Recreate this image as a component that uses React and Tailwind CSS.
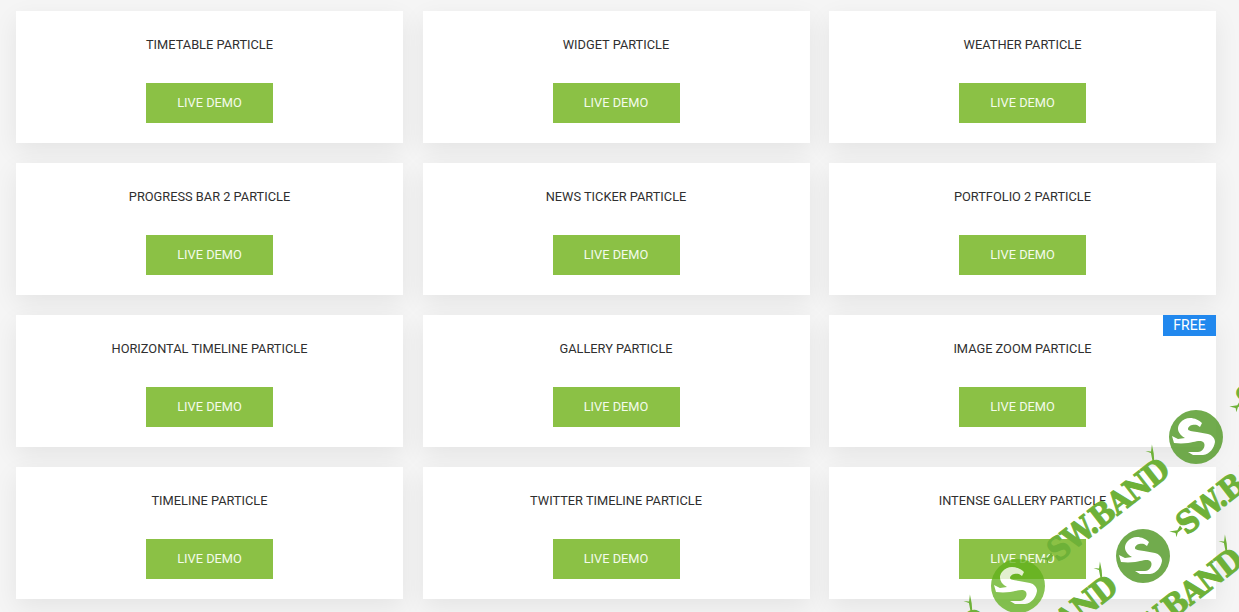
const items = [
  "TIMETABLE PARTICLE", "WIDGET PARTICLE", "WEATHER PARTICLE",
  "PROGRESS BAR 2 PARTICLE", "NEWS TICKER PARTICLE", "PORTFOLIO 2 PARTICLE",
  "HORIZONTAL TIMELINE PARTICLE", "GALLERY PARTICLE", "IMAGE ZOOM PARTICLE",
  "TIMELINE PARTICLE", "TWITTER TIMELINE PARTICLE", "INTENSE GALLERY PARTICLE",
];

function Logo({ x, y, light }) {
  return (
    <svg className="absolute" style={{ left: x - 30, top: y - 30 }} width="60" height="60" viewBox="-30 -30 60 60">
      <g opacity={light ? 0.75 : 0.9}>
        <circle r="27" fill={light ? "#5fb01a" : "#62a23a"} />
        <path
          d="M6 -14 C 1 -19 -10 -22 -16 -14 C -20 -9 -18 -3 -11 1 L -18 2 L -24 -1 L -22 6 C -14 7 -6 6 -3 5 C 2 4 6 3 8 6 C 10 10 6 15 2 15 L -8 15 L -3 18 L 7 18 C 14 17 18 11 19 5 C 19 1 16 -2 12 -3 L 1 -5 C -4 -6 -8 -6 -8 -8 C -8 -12 -2 -13 1 -12 L 4 -10 Z"
          fill="#ffffff"
        />
      </g>
    </svg>
  );
}

function Mark({ x, y }) {
  return (
    <span
      className="absolute whitespace-nowrap text-[31px] leading-none font-bold text-[#6eb138] -translate-x-1/2 -translate-y-1/2 -rotate-[38deg] [font-family:'DejaVu_Serif_Condensed','DejaVu_Serif',serif] tracking-[-1px] [-webkit-text-stroke:1px_#6eb138]"
      style={{ left: x, top: y }}
    >
      SW.BAND
      <svg className="absolute -right-[5px] -top-[10px]" width="14" height="16" viewBox="0 0 14 16">
        <path d="M2 15 L6 7 L3 2 L7 6 L12 1 L8 9 L4 15 Z" fill="#6eb138" />
      </svg>
      <svg className="absolute -left-[12px] top-[9px]" width="14" height="14" viewBox="0 0 14 14">
        <path d="M1 3 L8 7 L13 5 L13 9 L7 9 L3 12 L5 8 Z" fill="#6eb138" />
      </svg>
    </span>
  );
}

function Card({ title, free }) {
  return (
    <div className="relative h-[132px] bg-white flex flex-col items-center pt-[26px] shadow-[0_8px_24px_rgba(0,0,0,0.07)]">
      {free && (
        <span className="absolute right-0 top-0 w-[53px] h-[21px] bg-[#2188ee] text-white text-[14px] leading-[21px] text-center">
          FREE
        </span>
      )}
      <h3 className="h-[16px] text-[12.8px] leading-[16px] font-normal text-[#2f2f2f]">{title}</h3>
      <a className="mt-[30px] w-[127px] h-[40px] bg-[#8bc145] text-[#f4fbec] text-[12.8px] leading-[40px] text-center">
        LIVE DEMO
      </a>
    </div>
  );
}

export default function App() {
  return (
    <div className="relative h-[612px] overflow-hidden bg-[#f5f5f5] [font-family:Roboto,sans-serif]">
      <div className="w-[1200px] ml-4 pt-[11px] grid grid-cols-[387px_387px_387px] justify-between gap-y-5">
        {items.map((t) => (
          <Card key={t} title={t} free={t === "IMAGE ZOOM PARTICLE"} />
        ))}
      </div>
      <div className="absolute inset-0 pointer-events-none">
        <Logo x={1196} y={437} />
        <Logo x={1143} y={556} />
        <Logo x={1018} y={586} light />
        <Mark x={1108} y={510} />
        <Mark x={1237} y={483} />
        <Mark x={1056} y={627} />
        <Mark x={1181} y={600} />
        <Mark x={1297} y={358} />
        <Mark x={926} y={660} />
      </div>
    </div>
  );
}
